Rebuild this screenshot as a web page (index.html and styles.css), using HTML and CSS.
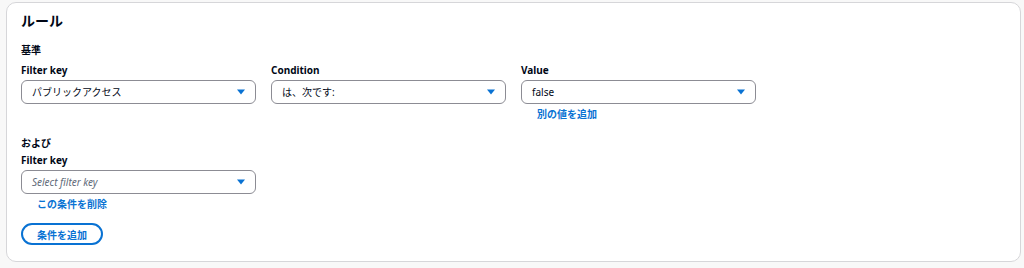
FILE: index.html
```html
<!DOCTYPE html>
<html lang="ja">
<head>
<meta charset="UTF-8">
<title>ルール</title>
<link rel="stylesheet" href="styles.css">
</head>
<body>
<div class="card">
  <h2 class="card-title">ルール</h2>

  <div class="group">
    <div class="group-label">基準</div>
    <div class="row">
      <div class="field">
        <div class="field-label">Filter key</div>
        <div class="select">
          <span class="select-text">パブリックアクセス</span>
          <svg class="caret" width="8" height="6" viewBox="0 0 8 6"><path d="M0 0.5h8L4 5.5z" fill="#0972d3"/></svg>
        </div>
      </div>
      <div class="field">
        <div class="field-label">Condition</div>
        <div class="select">
          <span class="select-text">は、次です:</span>
          <svg class="caret" width="8" height="6" viewBox="0 0 8 6"><path d="M0 0.5h8L4 5.5z" fill="#0972d3"/></svg>
        </div>
      </div>
      <div class="field">
        <div class="field-label">Value</div>
        <div class="select">
          <span class="select-text">false</span>
          <svg class="caret" width="8" height="6" viewBox="0 0 8 6"><path d="M0 0.5h8L4 5.5z" fill="#0972d3"/></svg>
        </div>
        <a class="link" href="#">別の値を追加</a>
      </div>
    </div>
  </div>

  <div class="group group-and">
    <div class="group-label">および</div>
    <div class="row">
      <div class="field">
        <div class="field-label">Filter key</div>
        <div class="select">
          <span class="select-text placeholder">Select filter key</span>
          <svg class="caret" width="8" height="6" viewBox="0 0 8 6"><path d="M0 0.5h8L4 5.5z" fill="#0972d3"/></svg>
        </div>
        <a class="link" href="#">この条件を削除</a>
      </div>
    </div>
  </div>

  <button class="add-button">条件を追加</button>
</div>
</body>
</html>
```

FILE: styles.css
```css
  body {
    font-family: "Noto Sans", "Noto Sans CJK JP", sans-serif;
    font-size: 10px;
    color: #000716;
    background-color: #f8f8f8;
    margin: 0;
    padding: 2px 3px 0 6px;
  }

  .card {
    background-color: #fff;
    border: 1px solid #d6d6d9;
    border-radius: 10px;
    padding: 8px 14px 14px;
    height: 236px;
  }

  .card-title {
    margin: 0;
    font-size: 14px;
    line-height: 20px;
    font-weight: bold;
  }

  .group {
    margin-top: 11px;
  }

  .group-and {
    margin-top: 13px;
  }

  .group-label,
  .field-label {
    font-weight: bold;
    line-height: 16px;
  }

  .field-label {
    margin-top: 4px;
    margin-bottom: 2px;
  }

  .group-and .field-label {
    margin-top: 1px;
  }

  .row {
    display: grid;
    grid-template-columns: 235px 235px 235px;
    column-gap: 15px;
  }

  .select {
    display: flex;
    align-items: center;
    justify-content: space-between;
    height: 22px;
    padding: 0 10px;
    border: 1px solid #8c8c94;
    border-radius: 6px;
  }

  .select-text {
    line-height: 16px;
  }

  .placeholder {
    font-style: italic;
    color: #5f6b7a;
  }

  .link {
    display: block;
    margin: 2px 0 0 16px;
    line-height: 16px;
    font-weight: bold;
    color: #0972d3;
    text-decoration: none;
  }

  .add-button {
    display: block;
    margin-top: 11px;
    height: 22px;
    padding: 0 14px;
    font-family: inherit;
    font-size: 10px;
    font-weight: bold;
    color: #0972d3;
    background-color: #fff;
    border: 2px solid #0972d3;
    border-radius: 12px;
    cursor: pointer;
  }
```
